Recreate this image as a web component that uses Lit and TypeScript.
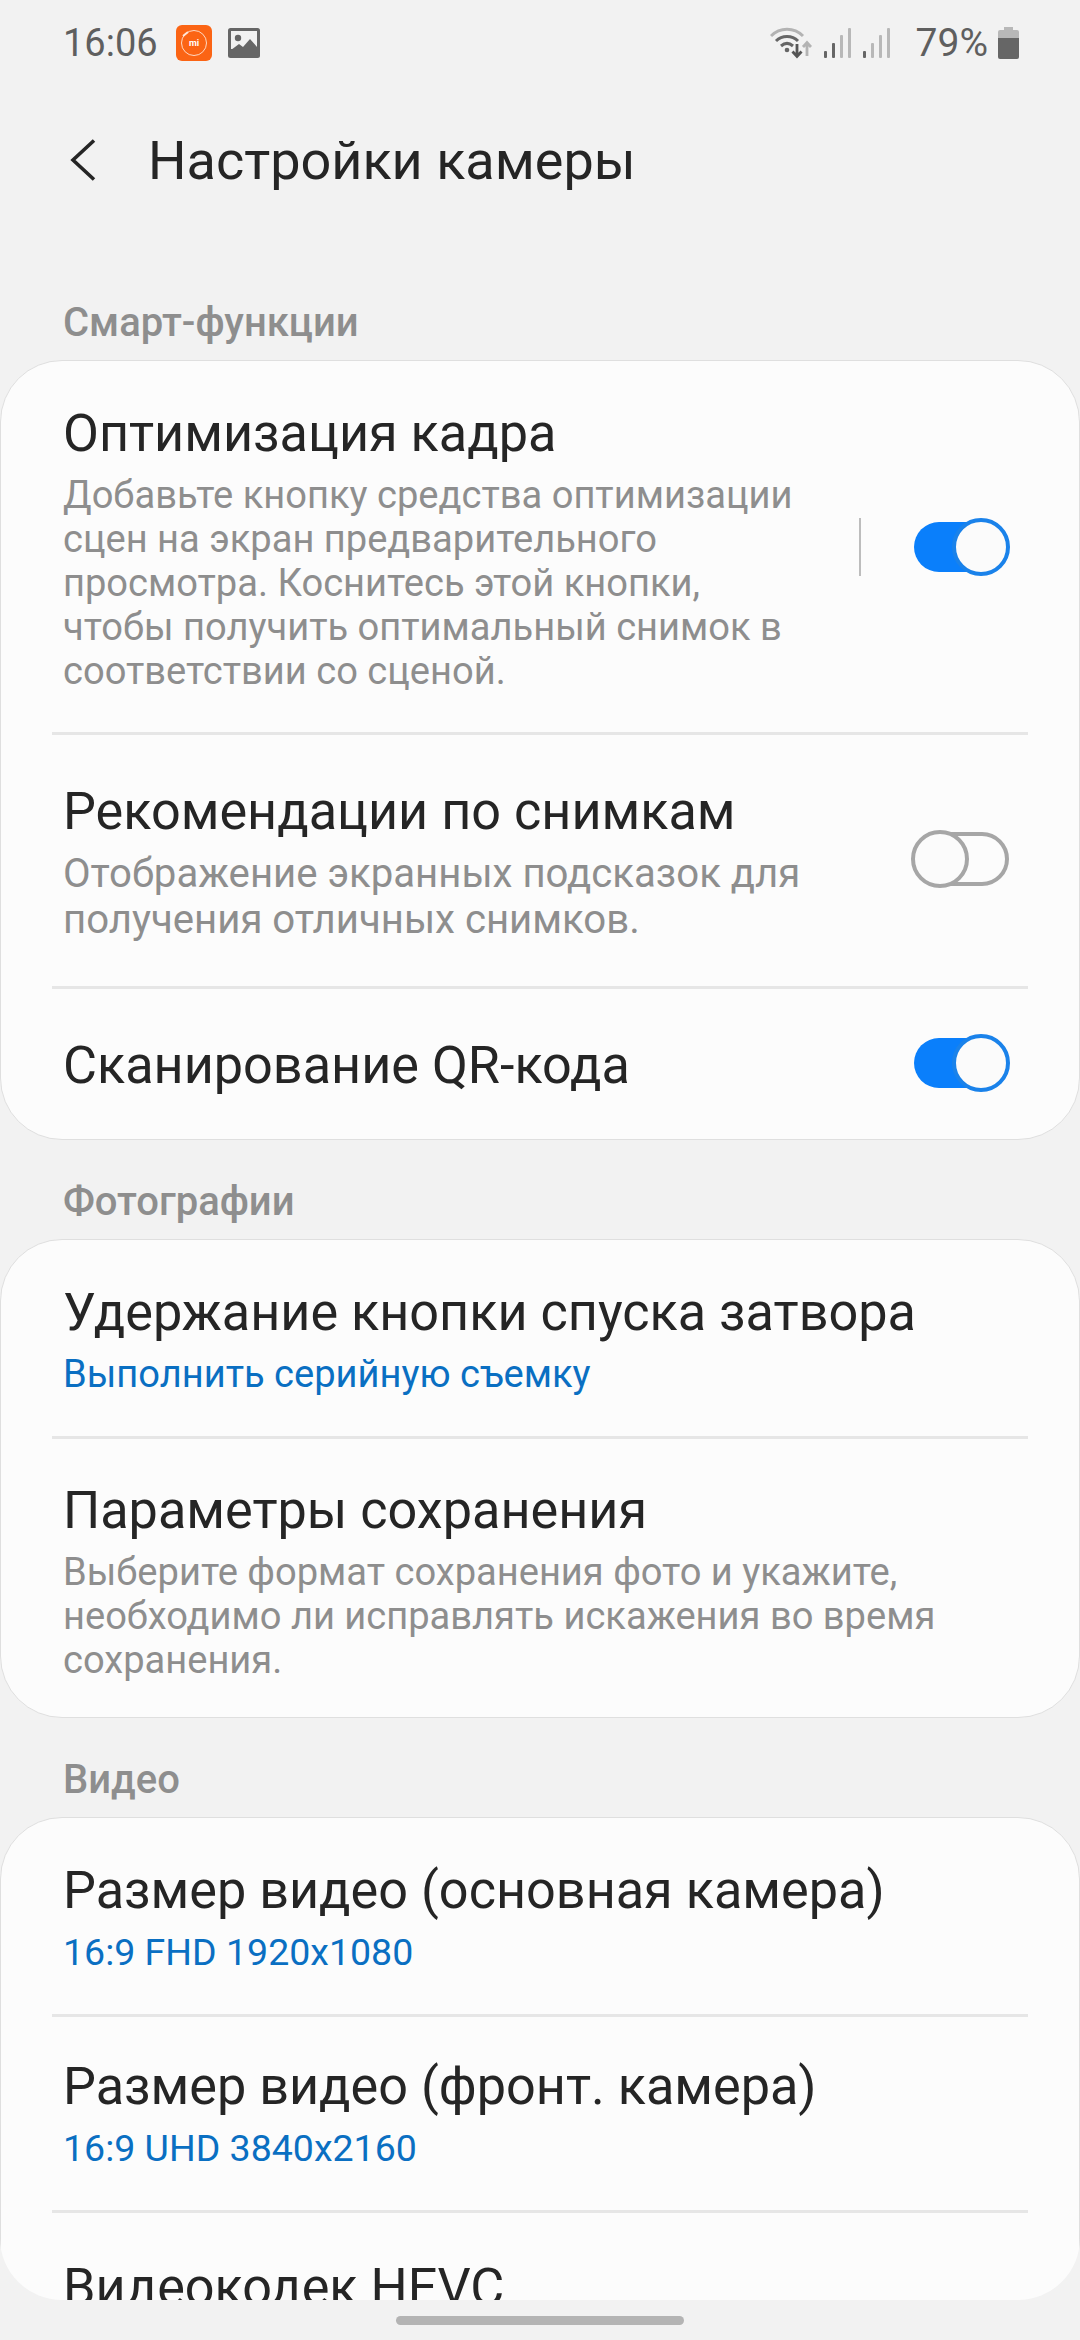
import {LitElement, html, css} from 'lit';
import {customElement} from 'lit/decorators.js';

type Row = {
  title: string;
  desc?: string[];
  value?: string;
  toggle?: 'on' | 'off';
  split?: boolean;
  cls?: string;
};

const smart: Row[] = [
  {
    title: 'Оптимизация кадра',
    desc: [
      'Добавьте кнопку средства оптимизации',
      'сцен на экран предварительного',
      'просмотра. Коснитесь этой кнопки,',
      'чтобы получить оптимальный снимок в',
      'соответствии со сценой.',
    ],
    toggle: 'on',
    split: true,
    cls: 'r-opt',
  },
  {
    title: 'Рекомендации по снимкам',
    desc: ['Отображение экранных подсказок для', 'получения отличных снимков.'],
    toggle: 'off',
    cls: 'r-rec',
  },
  {title: 'Сканирование QR-кода', toggle: 'on', cls: 'r-qr'},
];

const photos: Row[] = [
  {title: 'Удержание кнопки спуска затвора', value: 'Выполнить серийную съемку', cls: 'r-val'},
  {
    title: 'Параметры сохранения',
    desc: [
      'Выберите формат сохранения фото и укажите,',
      'необходимо ли исправлять искажения во время',
      'сохранения.',
    ],
    cls: 'r-save',
  },
];

const video: Row[] = [
  {title: 'Размер видео (основная камера)', value: '16:9 FHD 1920x1080', cls: 'r-val r-num'},
  {title: 'Размер видео (фронт. камера)', value: '16:9 UHD 3840x2160', cls: 'r-val r-num'},
  {title: 'Видеокодек HEVC', cls: 'r-last'},
];

@customElement('app-root')
export class AppRoot extends LitElement {
  static styles = css`
    :host {
      display: block;
      width: 1080px;
      height: 2340px;
      overflow: hidden;
      background: #f2f2f2;
      font-family: Roboto, 'Noto Sans', sans-serif;
    }
    .status {
      height: 86px;
      display: flex;
      align-items: center;
      padding: 0 61px 0 63px;
      color: #5f5f5f;
      font-size: 38px;
      box-sizing: border-box;
    }
    .status svg {
      display: block;
      flex: none;
    }
    .time {
      margin-right: 18px;
    }
    .gallery {
      margin-left: 16px;
    }
    .spacer {
      flex: 1;
    }
    .sig {
      margin-left: 12px;
    }
    .pct {
      margin: 0 10px 0 26px;
      font-size: 39px;
    }
    .header {
      height: 148px;
      display: flex;
      align-items: center;
      padding-left: 70px;
      color: #252525;
      font-size: 54px;
    }
    .header svg {
      display: block;
      margin-right: 52px;
    }
    .scroll {
      height: 2066px;
      overflow: hidden;
      border-radius: 0 0 62px 62px;
    }
    .label {
      height: 99px;
      padding: 0 63px 14px;
      display: flex;
      align-items: flex-end;
      box-sizing: border-box;
      color: #8e8e8e;
      font-size: 40px;
      font-weight: 500;
      line-height: 46px;
    }
    .label.first {
      height: 126px;
    }
    .card {
      background: #fcfcfc;
      border: 1px solid #dfdfdf;
      border-radius: 62px;
      box-sizing: border-box;
    }
    .card.open {
      height: 700px;
    }
    .row {
      position: relative;
      display: flex;
      align-items: center;
      padding: 0 62px;
    }
    .row + .row::before {
      content: '';
      position: absolute;
      left: 51px;
      right: 51px;
      top: 0;
      height: 3px;
      background: #e6e6e6;
    }
    .text {
      flex: 1;
      min-width: 0;
      white-space: nowrap;
      padding-bottom: 6px;
    }
    .title {
      color: #252525;
      font-size: 52.2px;
      line-height: 78px;
    }
    .desc {
      color: #8e8e8e;
      font-size: 38.1px;
      line-height: 44px;
    }
    .value {
      color: #0a6fc2;
      font-size: 38.1px;
      line-height: 44px;
    }
    .r-num .value {
      font-size: 37.5px;
    }
    .r-opt {
      height: 371px;
    }
    .r-rec {
      height: 254px;
    }
    .r-rec .text {
      padding-bottom: 3px;
    }
    .r-rec .desc {
      font-size: 40.15px;
      line-height: 46px;
    }
    .r-qr {
      height: 153px;
    }
    .r-qr .text {
      padding-bottom: 0;
      padding-top: 6px;
    }
    .r-val {
      height: 196px;
    }
    .r-save {
      height: 281px;
    }
    .r-save .text {
      padding-bottom: 0;
    }
    .r-last {
      align-items: flex-start;
      padding-top: 39px;
    }
    .split {
      width: 2px;
      height: 58px;
      background: #bdbdbd;
      margin-right: 53px;
      flex: none;
    }
    .toggle {
      position: relative;
      width: 95px;
      height: 50px;
      flex: none;
      box-sizing: border-box;
      border-radius: 25px;
      margin-right: 8px;
    }
    .toggle.on {
      background: #0a7ffb;
    }
    .toggle.off {
      border: 4px solid #a6a6a6;
      height: 54px;
      border-radius: 27px;
    }
    .thumb {
      position: absolute;
      width: 58px;
      height: 58px;
      box-sizing: border-box;
      border-radius: 50%;
      background: #fbfbfb;
    }
    .on .thumb {
      right: -1px;
      top: -4px;
      border: 4px solid #1a82ea;
    }
    .off .thumb {
      left: -7px;
      top: -6px;
      border: 4px solid #a6a6a6;
    }
    .nav {
      height: 40px;
      display: flex;
      justify-content: center;
      padding-top: 16px;
      box-sizing: border-box;
    }
    .pill {
      width: 288px;
      height: 9px;
      border-radius: 5px;
      background: #b4b4b4;
    }
    .mi {
      font: 700 9px Roboto, sans-serif;
      fill: #fff;
    }
  `;

  renderRow(r: Row) {
    return html`
      <div class="row ${r.cls ?? ''}">
        <div class="text">
          <div class="title">${r.title}</div>
          ${r.desc?.map((d) => html`<div class="desc">${d}</div>`)}
          ${r.value ? html`<div class="value">${r.value}</div>` : ''}
        </div>
        ${r.split ? html`<div class="split"></div>` : ''}
        ${r.toggle ? html`<div class="toggle ${r.toggle}"><div class="thumb"></div></div>` : ''}
      </div>
    `;
  }

  renderStatus() {
    return html`
      <div class="status">
        <span class="time">16:06</span>
        <svg width="36" height="36" viewBox="0 0 36 36">
          <rect width="36" height="36" rx="6" fill="#fb6414" />
          <circle cx="18" cy="18" r="12.5" fill="none" stroke="#ffd9c4" stroke-width="1" />
          <path d="M7 11l5-4" stroke="#ffe6d8" stroke-width="2" />
          <text class="mi" x="18" y="21" text-anchor="middle">mi</text>
        </svg>
        <svg class="gallery" width="32" height="30" viewBox="0 0 32 30">
          <rect width="32" height="30" rx="2.5" fill="#666" />
          <rect x="3" y="3" width="26" height="18" fill="#f2f2f2" />
          <circle cx="10" cy="10" r="3.2" fill="#666" />
          <path d="M3 22l8-6 4 3 7-8 7 8v5H3z" fill="#666" />
        </svg>
        <div class="spacer"></div>
        <svg width="42" height="32" viewBox="0 0 42 32">
          <path d="M1 9C10 0 24 0 33 9" fill="none" stroke="#b3b3b3" stroke-width="3" />
          <path d="M6 14c6-6 16-6 22 0" fill="none" stroke="#666" stroke-width="3" />
          <path d="M11 19c4-3.500 8-3.500 12 0" fill="none" stroke="#666" stroke-width="3" />
          <circle cx="17" cy="23" r="2.300" fill="#666" />
          <path d="M27 17v12M22.500 24.500l4.500 5 4.500-5" fill="none" stroke="#555" stroke-width="2.800" />
          <path d="M37 29V16M33 20l4-4.500 4 4.500" fill="none" stroke="#b3b3b3" stroke-width="2.800" />
        </svg>
        <svg class="sig" width="27" height="30" viewBox="0 0 27 30">
          <rect x="0" y="23" width="3" height="7" rx="1" fill="#666" />
          <rect x="8" y="15" width="3" height="15" rx="1" fill="#666" />
          <rect x="16" y="7" width="3" height="23" rx="1" fill="#b8b8b8" />
          <rect x="24" y="0" width="3" height="30" rx="1" fill="#b8b8b8" />
        </svg>
        <svg class="sig" width="27" height="30" viewBox="0 0 27 30">
          <rect x="0" y="23" width="3" height="7" rx="1" fill="#666" />
          <rect x="8" y="15" width="3" height="15" rx="1" fill="#b8b8b8" />
          <rect x="16" y="7" width="3" height="23" rx="1" fill="#b8b8b8" />
          <rect x="24" y="0" width="3" height="30" rx="1" fill="#b8b8b8" />
        </svg>
        <span class="pct">79%</span>
        <svg width="21" height="32" viewBox="0 0 21 32">
          <path d="M6 0h9v3h4a2 2 0 012 2v6H0V5a2 2 0 012-2h4z" fill="#b8b8b8" />
          <path d="M0 11h21v19a2 2 0 01-2 2H2a2 2 0 01-2-2z" fill="#666" />
        </svg>
      </div>
    `;
  }

  render() {
    return html`
      ${this.renderStatus()}
      <div class="header">
        <svg width="26" height="42" viewBox="0 0 26 42">
          <path d="M24 1.500L3 21l21 19.500" fill="none" stroke="#252525" stroke-width="3.600" />
        </svg>
        <span>Настройки камеры</span>
      </div>
      <div class="scroll">
        <div class="label first">Смарт-функции</div>
        <div class="card">${smart.map((r) => this.renderRow(r))}</div>
        <div class="label">Фотографии</div>
        <div class="card">${photos.map((r) => this.renderRow(r))}</div>
        <div class="label">Видео</div>
        <div class="card open">${video.map((r) => this.renderRow(r))}</div>
      </div>
      <div class="nav"><div class="pill"></div></div>
    `;
  }
}
